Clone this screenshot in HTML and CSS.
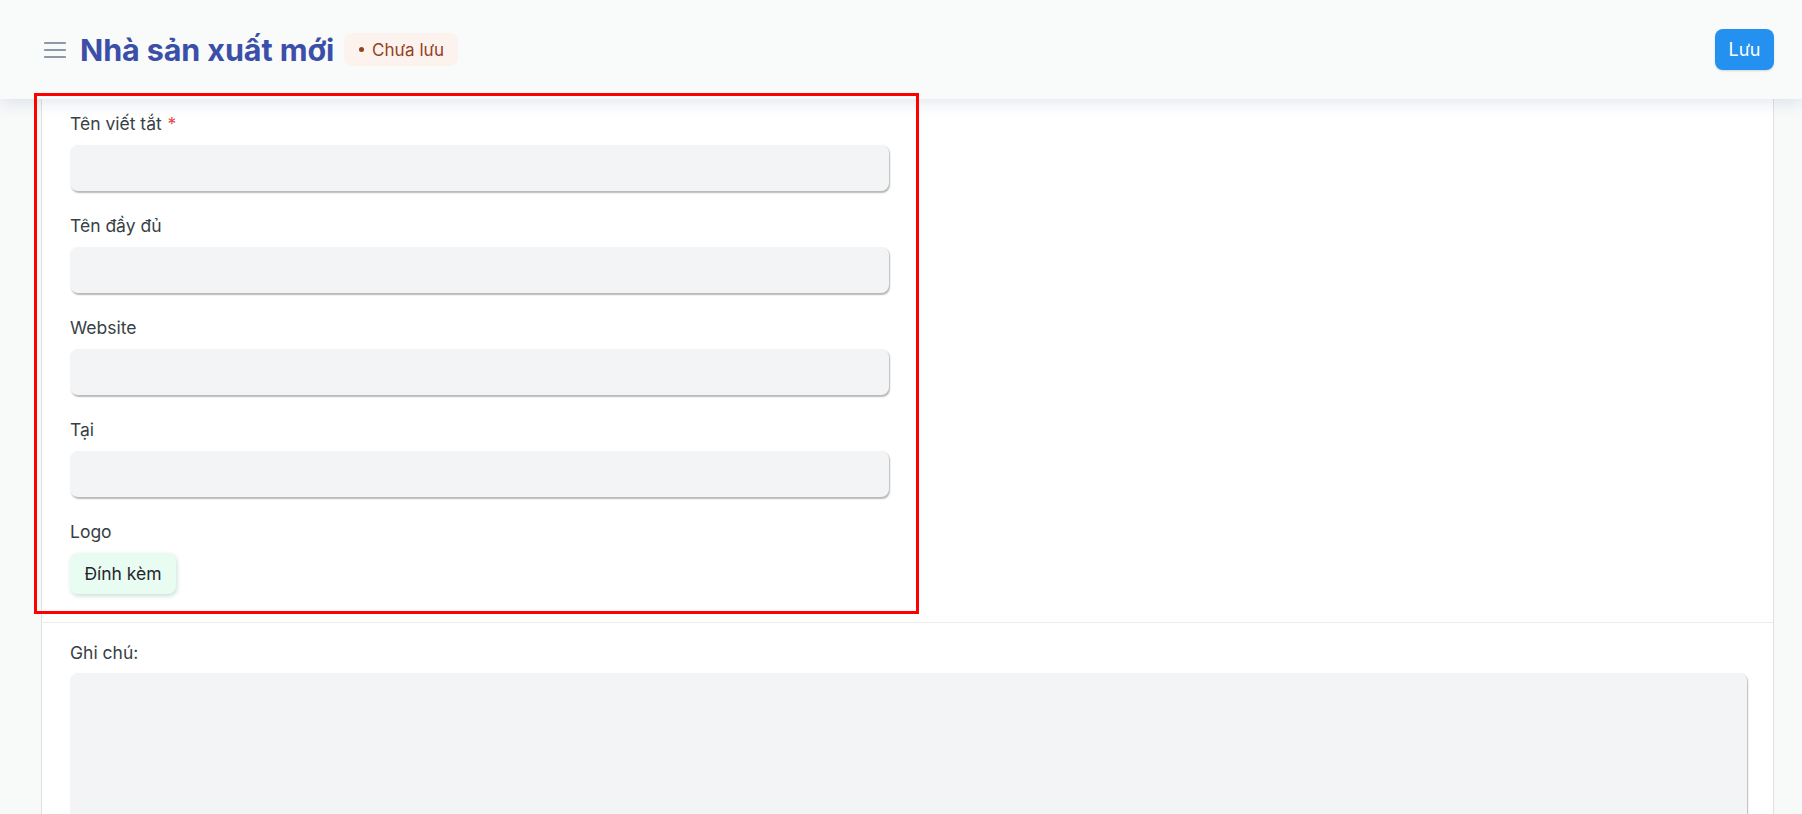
FILE: index.html
```html
<!DOCTYPE html>
<html lang="vi">
<head>
<meta charset="utf-8">
<title>Nhà sản xuất mới</title>
<link rel="stylesheet" href="styles.css">
</head>
<body>
<header class="page-head">
  <div class="head-left">
    <button class="menu-btn" aria-label="Menu">
      <svg width="22" height="18" viewBox="0 0 22 18"><path d="M1 2h20M1 9h20M1 16h20" stroke="#8d99a6" stroke-width="2.2" stroke-linecap="round" fill="none"/></svg>
    </button>
    <h1 class="title">Nhà sản xuất mới</h1>
    <span class="pill"><span class="dot"></span>Chưa lưu</span>
  </div>
  <button class="btn-primary">Lưu</button>
</header>

<main class="page-body">
  <div class="card">
    <section class="section">
      <div class="grid">
        <div class="col">
          <div class="field">
            <label class="label">Tên viết tắt <span class="req">*</span></label>
            <div class="input"></div>
          </div>
          <div class="field">
            <label class="label">Tên đầy đủ</label>
            <div class="input"></div>
          </div>
          <div class="field">
            <label class="label">Website</label>
            <div class="input"></div>
          </div>
          <div class="field">
            <label class="label">Tại</label>
            <div class="input"></div>
          </div>
          <div class="field last">
            <label class="label">Logo</label>
            <button class="btn-attach">Đính kèm</button>
          </div>
        </div>
        <div class="col"></div>
      </div>
    </section>
    <section class="section notes">
      <label class="label">Ghi chú:</label>
      <div class="textarea"></div>
    </section>
  </div>
</main>
<div class="highlight"></div>
</body>
</html>
```

FILE: styles.css
```css
* { box-sizing: border-box; }

html, body {
  margin: 0;
  padding: 0;
  height: 814px;
  overflow: hidden;
}

body {
  position: relative;
  background: #f8f9f9;
  font-family: Inter, "Noto Sans", sans-serif;
  color: #383f46;
}

.page-head {
  position: relative;
  z-index: 2;
  height: 99px;
  display: flex;
  align-items: center;
  justify-content: space-between;
  padding: 0 28px 0 41px;
  background: #f9fafa;
  box-shadow: 0 3px 16px rgba(40, 70, 130, 0.14);
}

.head-left {
  display: flex;
  align-items: center;
}

.menu-btn {
  border: 0;
  background: none;
  padding: 0;
  margin-left: 3px;
  margin-right: 14px;
  display: flex;
  width: 22px;
}

.title {
  margin: 0;
  font-size: 30.5px;
  font-weight: 700;
  color: #3c4fa8;
  letter-spacing: -0.1px;
}

.pill {
  margin-left: 10px;
  height: 33px;
  display: inline-flex;
  align-items: center;
  padding: 0 14px 0 15px;
  border-radius: 8px;
  background: #fdf3ee;
  color: #93411f;
  font-size: 17px;
}

.dot {
  width: 5px;
  height: 5px;
  border-radius: 50%;
  background: #93411f;
  margin-right: 8px;
}

.btn-primary {
  width: 59px;
  height: 41px;
  border: 0;
  border-radius: 8px;
  background: #2490ef;
  color: #fff;
  font-family: Inter, sans-serif;
  font-size: 18px;
  box-shadow: 0 1px 2px rgba(0, 0, 0, 0.15);
}

.page-body {
  padding: 0 28px 0 41px;
}

.card {
  background: #fff;
  border: 1px solid #dfe2e5;
  border-top: 0;
}

.section {
  padding: 15px 26px 28px 28px;
}

.grid {
  display: grid;
  grid-template-columns: 1fr 1fr;
  column-gap: 40px;
}

.field {
  margin-bottom: 25px;
}

.field.last {
  margin-bottom: 0;
}

.label {
  display: block;
  height: 20px;
  line-height: 20px;
  font-size: 17.5px;
  color: #383f46;
  margin-bottom: 11px;
}

.req {
  color: #e24c4c;
  margin-left: 1px;
}

.input {
  height: 46px;
  border-radius: 8px;
  background: #f3f4f6;
  box-shadow: 1px 1.5px 1.5px rgba(0, 0, 0, 0.28);
}

.btn-attach {
  width: 106px;
  height: 41px;
  border: 0;
  border-radius: 8px;
  background: #e9fcf1;
  color: #1f272e;
  font-family: Inter, sans-serif;
  font-size: 17.5px;
  box-shadow: 1px 2px 4px rgba(100, 170, 140, 0.35);
}

.notes {
  border-top: 1px solid #ececec;
  padding-top: 20px;
}

.notes .label {
  margin-bottom: 10px;
}

.textarea {
  height: 220px;
  border-radius: 8px;
  background: #f3f4f6;
  box-shadow: 1px 1.5px 1.5px rgba(0, 0, 0, 0.28);
}

.highlight {
  position: absolute;
  z-index: 3;
  left: 34px;
  top: 93px;
  width: 885px;
  height: 521px;
  border: 3px solid #ff0000;
  pointer-events: none;
}
```
